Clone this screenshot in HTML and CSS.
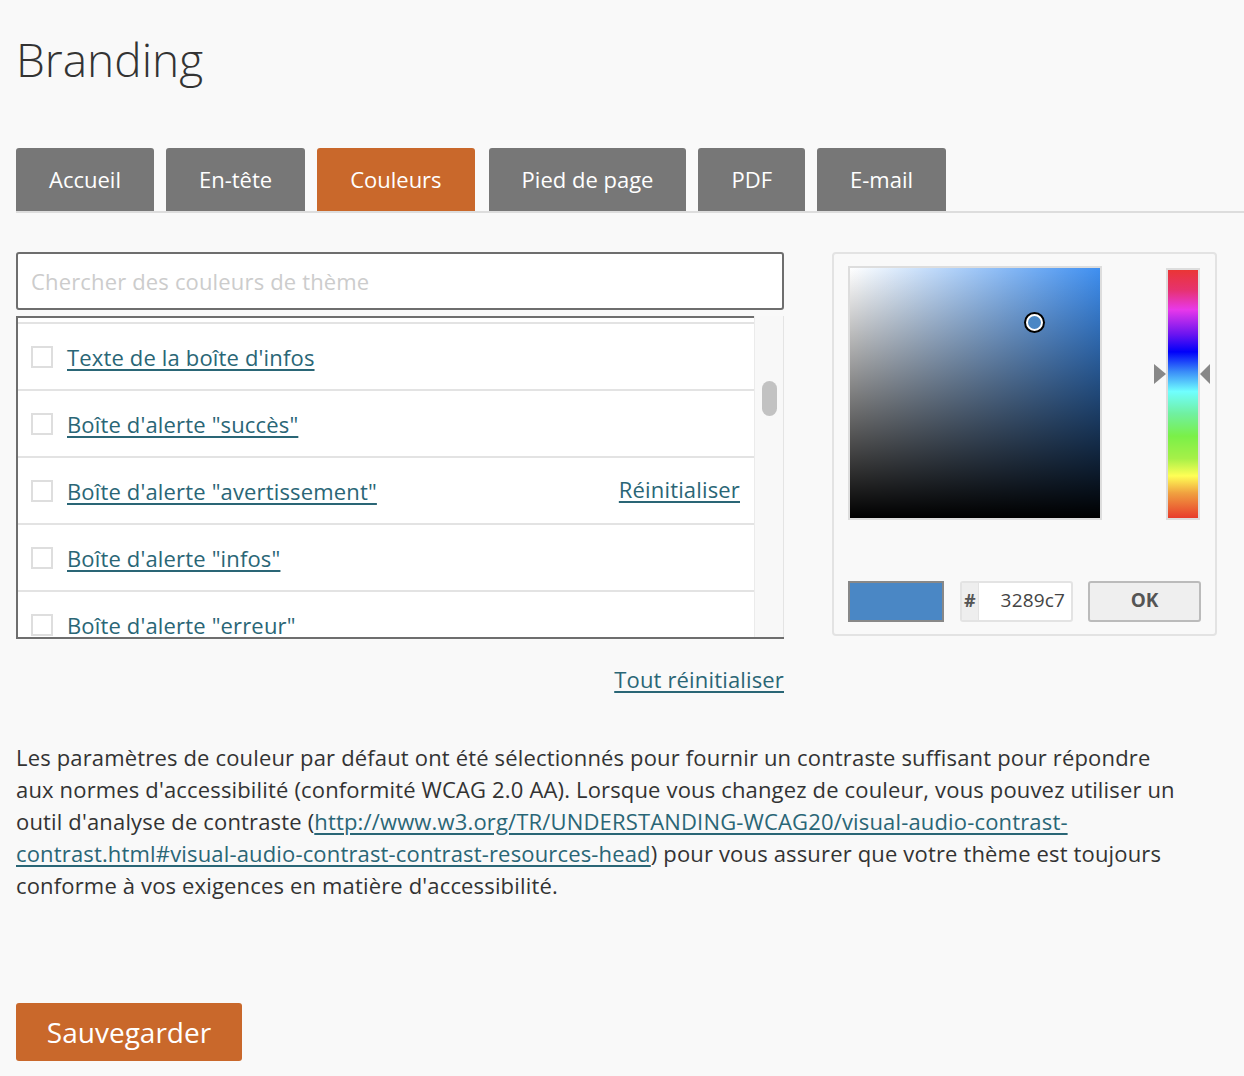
FILE: index.html
```html
<!DOCTYPE html>
<html lang="fr">
<head>
<meta charset="utf-8">
<title>Branding</title>
<link rel="stylesheet" href="styles.css">
</head>
<body>
<div class="page">
  <h1 class="title">Branding</h1>
  <nav class="tabs">
    <a class="tab">Accueil</a>
    <a class="tab">En-tête</a>
    <a class="tab active">Couleurs</a>
    <a class="tab">Pied de page</a>
    <a class="tab">PDF</a>
    <a class="tab">E-mail</a>
  </nav>

  <div class="editor">
    <div class="left">
      <input class="search" type="text" placeholder="Chercher des couleurs de thème">
      <div class="list">
        <div class="list-body">
          <div class="row"><span class="cb"></span><a class="link">Texte de la boîte d'infos</a></div>
          <div class="row"><span class="cb"></span><a class="link">Boîte d'alerte "succès"</a></div>
          <div class="row"><span class="cb"></span><a class="link">Boîte d'alerte "avertissement"</a><a class="link reset">Réinitialiser</a></div>
          <div class="row"><span class="cb"></span><a class="link">Boîte d'alerte "infos"</a></div>
          <div class="row"><span class="cb"></span><a class="link">Boîte d'alerte "erreur"</a></div>
        </div>
        <div class="scrollbar"><div class="thumb"></div></div>
      </div>
      <div class="reset-all"><a class="link">Tout réinitialiser</a></div>
    </div>

    <div class="picker">
      <div class="picker-top">
        <div class="sat">
          <div class="sat-inner"><span class="marker"></span></div>
        </div>
        <div class="hue-wrap">
          <span class="arrow arrow-left"></span>
          <div class="hue"></div>
          <span class="arrow arrow-right"></span>
        </div>
      </div>
      <div class="picker-bottom">
        <div class="swatch"></div>
        <div class="hex"><span class="hash">#</span><span class="hex-val">3289c7</span></div>
        <button class="ok">OK</button>
      </div>
    </div>
  </div>

  <p class="note">Les paramètres de couleur par défaut ont été sélectionnés pour fournir un contraste suffisant pour répondre aux normes d'accessibilité (conformité WCAG 2.0 AA). Lorsque vous changez de couleur, vous pouvez utiliser un outil d'analyse de contraste (<a class="link">http://www.w3.org/TR/UNDERSTANDING-WCAG20/visual-audio-contrast-contrast.html#visual-audio-contrast-contrast-resources-head</a>) pour vous assurer que votre thème est toujours conforme à vos exigences en matière d'accessibilité.</p>

  <button class="save">Sauvegarder</button>
</div>
</body>
</html>
```

FILE: styles.css
```css
* { box-sizing: border-box; }

html, body {
  margin: 0;
  padding: 0;
  background: #f9f9f9;
}

body {
  font-family: "Open Sans", "DejaVu Sans", sans-serif;
  color: #333;
  font-size: 22px;
  letter-spacing: 0.16px;
}

.page {
  padding: 0 16px 0 16px;
  width: 1244px;
  height: 1076px;
  overflow: hidden;
}

.title {
  margin: 29px 0 0 0;
  font-size: 46px;
  line-height: 60px;
  font-weight: 300;
  letter-spacing: 0;
  color: #333;
}

.tabs {
  display: flex;
  margin-top: 59px;
  margin-right: -16px;
  border-bottom: 2px solid #dddddd;
}

.tab {
  display: flex;
  align-items: center;
  height: 63px;
  padding: 0 33px 1px 33px;
  margin-right: 12px;
  background: #777777;
  color: #ffffff;
  font-size: 22px;
  letter-spacing: 0;
  border-radius: 3px 3px 0 0;
}

.tab.active {
  background: #c9682b;
  margin-right: 14px;
}

.editor {
  display: grid;
  grid-template-columns: 768px 385px;
  column-gap: 48px;
  align-items: start;
  margin-top: 39px;
}

.search {
  display: block;
  width: 100%;
  height: 58px;
  border: 2px solid #6e6e6e;
  border-radius: 3px;
  background: #fff;
  padding: 0 13px;
  font-family: "Open Sans", sans-serif;
  font-size: 22px;
  letter-spacing: 0.16px;
  color: #333;
  outline: none;
}

.search::placeholder {
  color: #cccccc;
}

.list {
  display: flex;
  margin-top: 6px;
  height: 323px;
  border-left: 2px solid #6e6e6e;
  border-bottom: 2px solid #6e6e6e;
}

.list-body {
  flex: 1;
  background: #fff;
  border-top: 2px solid #6e6e6e;
  padding-top: 4px;
  overflow: hidden;
}

.row {
  display: flex;
  align-items: center;
  height: 67px;
  border-top: 2px solid #e3e3e3;
  padding: 0 14px 0 13px;
  flex-shrink: 0;
}

.cb {
  width: 22px;
  height: 22px;
  border: 2px solid #dedede;
  background: #fff;
  margin-right: 14px;
  flex-shrink: 0;
}

.link {
  color: #2a6676;
  text-decoration: underline;
  text-decoration-thickness: 2px;
  text-underline-offset: 3px;
}

.row .reset {
  margin-left: auto;
  margin-top: -4px;
}

.scrollbar {
  width: 30px;
  background: #f8f8f8;
  border-left: 1px solid #ebebeb;
  border-right: 1px solid #e4e4e4;
  padding: 65px 0 0 7px;
}

.thumb {
  width: 15px;
  height: 35px;
  border-radius: 8px;
  background: #c2c2c2;
}

.reset-all {
  margin-top: 24px;
  text-align: right;
  line-height: 32px;
}

.picker {
  border: 2px solid #e3e3e3;
  border-radius: 4px;
  padding: 12px 5px 12px 14px;
}

.picker-top {
  display: flex;
  justify-content: space-between;
}

.sat {
  width: 254px;
  height: 254px;
  border: 2px solid #dddddd;
}

.sat-inner {
  position: relative;
  width: 100%;
  height: 100%;
  background:
    linear-gradient(to top, #000 0%, rgba(0,0,0,0) 100%),
    linear-gradient(to right, #ffffff 0%, #3f8ff0 100%);
}

.marker {
  position: absolute;
  left: 176px;
  top: 46px;
  width: 17px;
  height: 17px;
  border-radius: 50%;
  background: #4a87c5;
  border: 2px solid #fff;
  box-shadow: 0 0 0 2px #000;
}

.hue-wrap {
  position: relative;
  padding: 2px 10px 0 12px;
}

.hue {
  width: 34px;
  height: 252px;
  border: 2px solid #dddddd;
  background: linear-gradient(to bottom,
    #ea3535 0%,
    #e6326e 8%,
    #e838ea 16%,
    #6a14f0 26%,
    #0000fa 33%,
    #3a8cf8 41%,
    #70ffff 49%,
    #70f0a0 58%,
    #7af048 67%,
    #a6f048 76%,
    #ffff55 83%,
    #f0a040 90%,
    #e83c2c 100%);
}

.arrow {
  position: absolute;
  top: 98px;
  width: 0;
  height: 0;
  border-top: 10px solid transparent;
  border-bottom: 10px solid transparent;
}

.arrow-left {
  left: 0;
  border-left: 12px solid #888;
}

.arrow-right {
  right: 0;
  border-right: 10px solid #888;
}

.picker-bottom {
  display: flex;
  align-items: stretch;
  margin-top: 61px;
  height: 41px;
}

.swatch {
  width: 96px;
  background: #4a87c5;
  border: 2px solid #888888;
}

.hex {
  display: flex;
  width: 113px;
  margin-left: 16px;
  border: 2px solid #e3e3e3;
  border-radius: 3px;
  background: #fff;
  overflow: hidden;
}

.hash {
  width: 17px;
  background: #eeeeee;
  color: #555;
  font-weight: 700;
  font-size: 18px;
  display: flex;
  align-items: center;
  justify-content: center;
  padding-bottom: 3px;
  border-right: 1px solid #e3e3e3;
}

.hex-val {
  flex: 1;
  display: flex;
  align-items: center;
  justify-content: flex-end;
  padding: 0 6px 3px 0;
  font-size: 19px;
  color: #444;
}

.ok {
  width: 113px;
  margin-left: 15px;
  border: 2px solid #bbbbbb;
  border-radius: 3px;
  background: #efefef;
  color: #555;
  font-family: "Open Sans", sans-serif;
  font-weight: 700;
  font-size: 19px;
  padding: 0 0 4px 0;
}

.note {
  margin: 46px 0 0 0;
  width: 1172px;
  line-height: 32px;
  font-size: 22px;
  color: #333;
}

.save {
  display: block;
  margin-top: 102px;
  width: 226px;
  height: 58px;
  border: none;
  border-radius: 3px;
  background: #c9682b;
  color: #fff;
  font-family: "Open Sans", sans-serif;
  font-size: 28px;
  letter-spacing: 0;
  padding: 0;
}
```
